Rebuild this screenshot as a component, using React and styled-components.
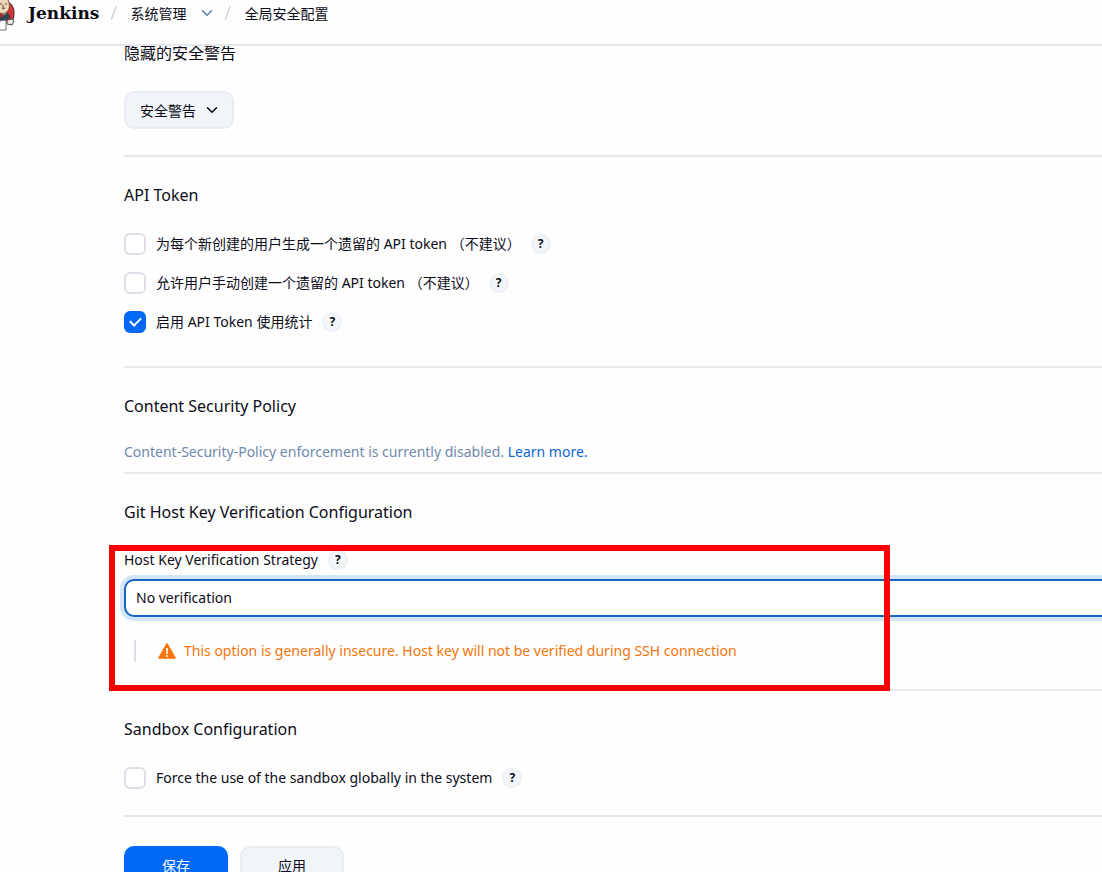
import React from "react";
import { useState } from "react";
import styled, { createGlobalStyle } from "styled-components";

const GlobalStyle = createGlobalStyle`
  * {
    box-sizing: border-box;
  }

  body {
    margin: 0;
    overflow: hidden;
    background: #fefefe;
    color: #0c0c18;
    font-family: "Noto Sans", "Noto Sans CJK SC", sans-serif;
    font-size: 14px;
  }

  button,
  select {
    color: inherit;
    font: inherit;
  }
`;

const Page = styled.div`
  height: 100vh;
  overflow: hidden;
`;

const Header = styled.header`
  position: relative;
  z-index: 1;
  display: flex;
  align-items: flex-start;
  height: 46px;
  border-bottom: 2px solid #e5e8ed;
  background: #fefefe;
`;

const Brand = styled.a`
  display: flex;
  gap: 13px;
  color: #0c0c18;
  text-decoration: none;
  font-family: "DejaVu Serif", serif;
  font-size: 17px;
  font-weight: bold;
  line-height: 26px;
`;

const Breadcrumbs = styled.nav`
  display: flex;
  align-items: center;
  height: 26px;
  margin-left: 11px;
`;

const Crumb = styled.a`
  color: inherit;
  text-decoration: none;
`;

const Slash = styled.svg`
  width: 8px;
  height: 16px;
  margin-right: 12px;
`;

const MenuButton = styled.button`
  display: flex;
  padding: 0 11px 0 15px;
  border: 0;
  background: none;
`;

const Main = styled.main`
  margin: -5px -24px 0 124px;
`;

const Section = styled.section`
  position: relative;
  padding-top: ${(p) => (p.$first ? 0 : 26)}px;
  padding-bottom: ${(p) => p.$bottom || 26}px;
  border-bottom: 2px solid #e5e8ed;
`;

const Title = styled.h2`
  margin: 0 0 26px;
  font-size: 16px;
  font-weight: 400;
  line-height: 24px;
`;

const Button = styled.button`
  display: inline-flex;
  align-items: center;
  justify-content: center;
  gap: 10px;
  height: 38px;
  min-width: ${(p) => (p.$wide ? 104 : 0)}px;
  padding: 0 14px;
  border: 2px solid ${(p) => (p.$primary ? "#0068f5" : "#e9edf2")};
  border-radius: 10px;
  background: ${(p) => (p.$primary ? "#0068f5" : "#f1f5f9")};
  color: ${(p) => (p.$primary ? "#fff" : "inherit")};
`;

const CheckList = styled.div`
  display: flex;
  flex-direction: column;
  gap: 17px;
`;

const Row = styled.div`
  display: flex;
  align-items: center;
  gap: 10px;
`;

const CheckLabel = styled.label`
  display: flex;
  align-items: center;
  gap: 10px;
  height: 22px;
  line-height: 22px;
`;

const CheckBox = styled.input`
  appearance: none;
  display: grid;
  place-items: center;
  width: 22px;
  height: 22px;
  margin: 0;
  border: 2px solid #dcdfe8;
  border-radius: 6px;
  background: #fff;

  &:checked {
    border-color: #0068f5;
    background: #0068f5;
  }

  &:checked::before {
    content: "";
    width: 9px;
    height: 5px;
    margin-bottom: 3px;
    border: solid #fff;
    border-width: 0 0 2px 2px;
    transform: rotate(-45deg);
  }
`;

const HelpButton = styled.button`
  width: 20px;
  height: 20px;
  padding: 0;
  border: 2px solid #edf0f5;
  border-radius: 50%;
  background: #f3f6fa;
  font-size: 12px;
  font-weight: 700;
  line-height: 16px;
`;

const Description = styled.p`
  margin: 0;
  color: #7089ad;
  line-height: 16px;
`;

const Link = styled.a`
  color: #0b66d8;
  text-decoration: none;
`;

const FieldLabel = styled.label`
  line-height: 20px;
`;

const Select = styled.select`
  appearance: none;
  display: block;
  width: 100%;
  height: 38px;
  margin: 9px 0 23px;
  padding: 0 10px 2px;
  border: 2px solid #1464c4;
  border-radius: 10px;
  background: #fff;
  box-shadow: 0 0 0 4px #d3e5f9;
`;

const Warning = styled.div`
  display: flex;
  align-items: center;
  gap: 8px;
  height: 22px;
  margin-left: 10px;
  padding-left: 22px;
  border-left: 2px solid #dcdfe8;
  color: #f0760c;
  line-height: 22px;
`;

// marks the strategy field, drawn over the form
const Highlight = styled.div`
  position: absolute;
  top: 71px;
  bottom: -2px;
  left: -15px;
  width: 781px;
  border: 6px solid #fb0000;
  pointer-events: none;
`;

const Footer = styled.div`
  display: flex;
  gap: 12px;
  padding-top: 29px;
`;

const Logo = () => (
  <svg width="15" height="32" viewBox="0 0 15 32" aria-hidden="true">
    <path d="M8 2c4 2 6 6 6 11 0 4-1 7-2 9L6 18Z" fill="#d33833" stroke="#3b2020" />
    <path d="M0 0h8c2 4 2 9-1 12l-4 3-3-1Z" fill="#f0d6b7" />
    <path d="M8 0c2 4 2 9-1 12l-4 2-3-1" fill="none" stroke="#6d5750" />
    <path d="M0 4h2M5 4h2M2 9l3-1M3 5v3" fill="none" stroke="#59443c" />
    <path d="M0 13l4 2 4-2 3 3-1 6H0Z" fill="#a92b2b" />
    <path d="M3 15l5-2 2 4-3 4-4-2Z" fill="#34424f" />
    <path d="M0 17h6v4H0Z" fill="#34424f" />
    <path d="M0 21l6-1v10H0" fill="#fff" stroke="#666e76" />
    <path d="M7 20l5-1 2 2-2 4-5-1Z" fill="#eee6df" stroke="#4b4748" />
  </svg>
);

const Chevron = ({ color }) => (
  <svg width="12" height="12" viewBox="0 0 12 12" aria-hidden="true">
    <path
      d="M1.5 3.8 6 8.2l4.5-4.4"
      fill="none"
      stroke={color}
      strokeWidth="1.6"
      strokeLinecap="round"
      strokeLinejoin="round"
    />
  </svg>
);

const Separator = () => (
  <Slash viewBox="0 0 8 16" aria-hidden="true">
    <path d="M1.5 14 6 2" stroke="#cfd3da" strokeWidth="1.5" strokeLinecap="round" />
  </Slash>
);

const WarningIcon = () => (
  <svg width="18" height="18" viewBox="0 0 18 18" aria-hidden="true">
    <path
      d="M9 2 17 16H1Z"
      fill="#f87308"
      stroke="#f87308"
      strokeWidth="1.6"
      strokeLinejoin="round"
    />
    <path d="M9 6.5v5" stroke="#fff" strokeWidth="1.6" strokeLinecap="round" />
    <circle cx="9" cy="14" r="1" fill="#fff" />
  </svg>
);

const Help = () => (
  <HelpButton type="button" aria-label="Help">
    ?
  </HelpButton>
);

const CheckRow = ({ text, checked, onToggle }) => (
  <Row>
    <CheckLabel>
      <CheckBox type="checkbox" checked={checked} onChange={onToggle} />
      <span>{text}</span>
    </CheckLabel>
    <Help />
  </Row>
);

const tokenOptions = [
  { id: "create", text: "为每个新创建的用户生成一个遗留的 API token （不建议）" },
  { id: "manual", text: "允许用户手动创建一个遗留的 API token （不建议）" },
  { id: "stats", text: "启用 API Token 使用统计" },
];

const App = () => {
  const [checks, setChecks] = useState({ stats: true });
  const toggle = (id) => setChecks({ ...checks, [id]: !checks[id] });

  return (
    <Page>
      <GlobalStyle />
      <Header>
        <Brand href="#">
          <Logo />
          Jenkins
        </Brand>
        <Breadcrumbs>
          <Separator />
          <Crumb href="#">系统管理</Crumb>
          <MenuButton type="button" aria-label="系统管理">
            <Chevron color="#5f7fae" />
          </MenuButton>
          <Separator />
          <Crumb href="#">全局安全配置</Crumb>
        </Breadcrumbs>
      </Header>

      <Main>
        <Section $first>
          <Title>隐藏的安全警告</Title>
          <Button type="button">
            安全警告
            <Chevron color="#0c0c18" />
          </Button>
        </Section>

        <Section $bottom={33}>
          <Title>API Token</Title>
          <CheckList>
            {tokenOptions.map((o) => (
              <CheckRow
                key={o.id}
                text={o.text}
                checked={!!checks[o.id]}
                onToggle={() => toggle(o.id)}
              />
            ))}
          </CheckList>
        </Section>

        <Section $bottom={12}>
          <Title>Content Security Policy</Title>
          <Description>
            Content-Security-Policy enforcement is currently disabled.{" "}
            <Link href="#">Learn more.</Link>
          </Description>
        </Section>

        <Section $bottom={27}>
          <Title>Git Host Key Verification Configuration</Title>
          <Row>
            <FieldLabel htmlFor="strategy">Host Key Verification Strategy</FieldLabel>
            <Help />
          </Row>
          <Select id="strategy">
            <option>No verification</option>
          </Select>
          <Warning>
            <WarningIcon />
            This option is generally insecure. Host key will not be verified during SSH connection
          </Warning>
          <Highlight />
        </Section>

        <Section>
          <Title>Sandbox Configuration</Title>
          <CheckRow
            text="Force the use of the sandbox globally in the system"
            checked={!!checks.sandbox}
            onToggle={() => toggle("sandbox")}
          />
        </Section>

        <Footer>
          <Button type="submit" $primary $wide>
            保存
          </Button>
          <Button type="button" $wide>
            应用
          </Button>
        </Footer>
      </Main>
    </Page>
  );
};

export default App;
